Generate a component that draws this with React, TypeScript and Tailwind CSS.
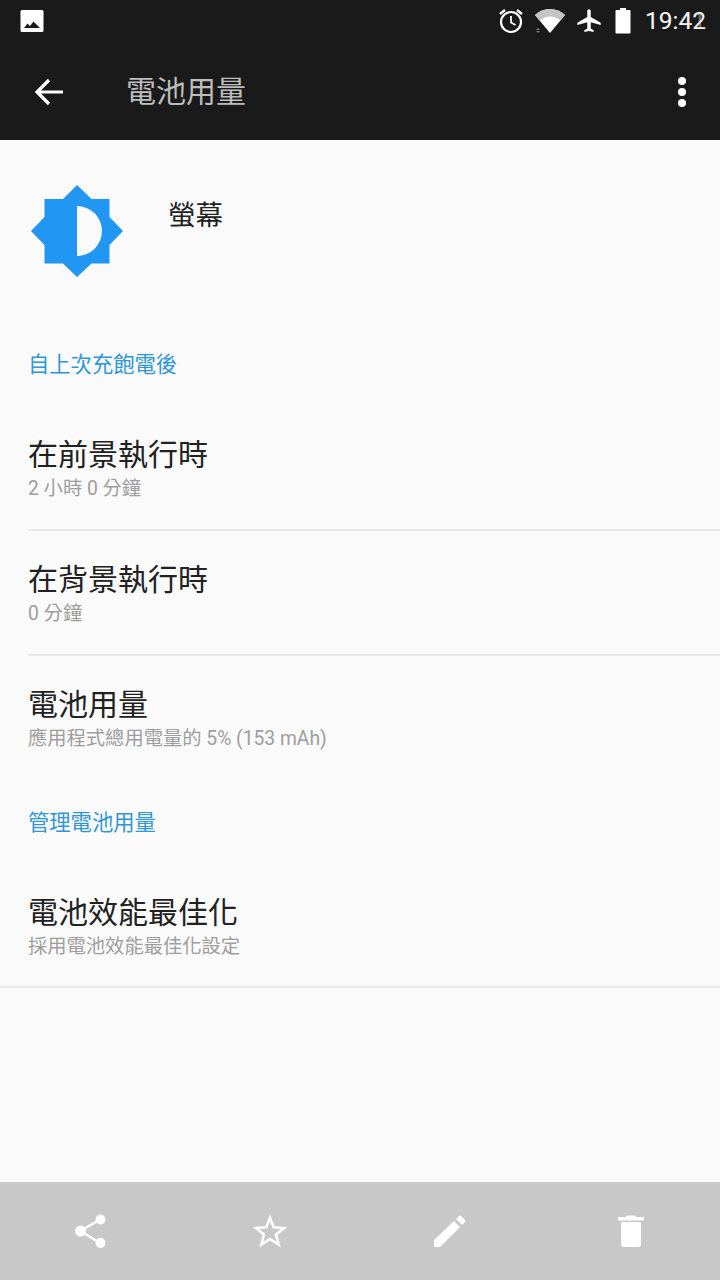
const cjk = "font-['Roboto','Noto_Sans_CJK_TC',sans-serif]";

function Row({ title, sub, divider, full }: { title: string; sub: string; divider?: boolean; full?: boolean }) {
  return (
    <div className={full ? "" : "pl-[28px]"}>
      <div className={full ? "pl-[28px] pt-[31px] pb-[26px]" : "pt-[31px] pb-[27px]"}>
        <div className="text-[30px] leading-[36px] text-[#212121]">{title}</div>
        <div className="text-[19.3px] leading-[26px] mt-[3px] text-[#9e9e9e]">{sub}</div>
      </div>
      {divider ? <div className="h-[2px] bg-[#e8e8e8]" /> : null}
    </div>
  );
}

function Section({ children, cls }: { children: string; cls: string }) {
  return <div className={`pl-[28px] text-[21.3px] leading-[28px] text-[#2f97d6] ${cls}`}>{children}</div>;
}

export default function App() {
  return (
    <div className={`w-[720px] h-[1280px] flex flex-col bg-[#fafafa] overflow-hidden ${cjk}`}>
      <div className="h-[140px] bg-[#1a1a1a] shrink-0 flex flex-col">
        <div className="h-[42px] flex items-center pl-[20px] pr-[14px] shrink-0">
          <svg width="24" height="24" viewBox="0 0 24 24">
            <path d="M2 1h20a1.500 1.500 0 0 1 1.500 1.500v19a1.500 1.500 0 0 1-1.500 1.500H2a1.500 1.500 0 0 1-1.500-1.500v-19A1.500 1.500 0 0 1 2 1z" fill="#fff" />
            <path d="M4 19l3.500-4.500 2.500 2.500 3.500-4.500 6.500 6.500z" fill="#1a1a1a" />
          </svg>
          <div className="flex-1" />
          <svg width="26" height="26" viewBox="0 0 26 26" className="mr-[10px]" fill="none" stroke="#fff">
            <circle cx="13" cy="14" r="10" strokeWidth="2.200" />
            <path d="M13 8v6.500l4.500 2.500" strokeWidth="1.800" />
            <path d="M2 6l5-4M24 6l-5-4" strokeWidth="2.400" />
          </svg>
          <svg width="32" height="26" viewBox="0 0 32 26" className="mr-[9px]">
            <path d="M1 7C9-1 23-1 31 7L16 25z" fill="#fff" />
            <path d="M1 7C9-1 23-1 31 7L26.500 12.500C20 7 12 7 5.500 12.500z" fill="#c4c4c4" />
            <path d="M4 20l-2 2h4zM4 25l-2-2h4z" fill="#777" />
          </svg>
          <svg width="28" height="28" viewBox="0 0 24 24" className="mr-[12px]">
            <path d="M22 15.500v-2l-8.500-5V3.500C13.500 2.670 12.830 2 12 2s-1.500.67-1.500 1.500v5L2 13.500v2l8.500-2.500v5.500l-2.500 1.500v1.500l4-1 4 1V20l-2.500-1.500V13z" fill="#fff" />
          </svg>
          <svg width="16" height="26" viewBox="0 0 16 26" className="mr-[14px]">
            <path d="M5 0h6v2h3.500a1 1 0 0 1 1 1v21.500a1 1 0 0 1-1 1H1.500a1 1 0 0 1-1-1V3a1 1 0 0 1 1-1H5z" fill="#fff" />
          </svg>
          <div className="relative text-[24.500px] leading-[28px] text-[#f0f0f0] font-['Roboto',sans-serif]">
            <span>19:42</span>
            <span className="absolute left-0 top-0 opacity-40">19:41</span>
          </div>
        </div>
        <div className="flex-1 flex items-center">
          <svg width="32" height="32" viewBox="0 0 32 32" className="ml-[33px] mt-[2px]" fill="none" stroke="#fff" strokeWidth="3.200">
            <path d="M30 16H5M16 4L4 16l12 12" />
          </svg>
          <div className="ml-[61px] mt-[2px] text-[30px] leading-[36px] text-[#bdbdbd]">電池用量</div>
          <div className="flex-1" />
          <div className="mr-[34px] mt-[2px] flex flex-col gap-[3px]">
            <div className="w-[8px] h-[8px] rounded-full bg-white" />
            <div className="w-[8px] h-[8px] rounded-full bg-white" />
            <div className="w-[8px] h-[8px] rounded-full bg-white" />
          </div>
        </div>
      </div>

      <div className="flex-1">
        <div className="flex h-[185px]">
          <svg width="92" height="92" viewBox="0 0 92 92" className="ml-[31px] mt-[45px]">
            <path d="M46 0L60.500 14H78.500V32L92 46L78.500 60V78.500H60.500L46 92L32 78.500H13.500V60L0 46L13.500 32V14H32Z" fill="#2196f3" />
            <path d="M46 21A25 25 0 0 1 46 71Z" fill="#fafafa" />
          </svg>
          <div className="ml-[45px] mt-[60px] text-[27.500px] leading-[32px] text-[#212121]">螢幕</div>
        </div>
        <Section cls="mt-[26px] mb-[27px]">自上次充飽電後</Section>
        <Row title="在前景執行時" sub="2 小時 0 分鐘" divider />
        <Row title="在背景執行時" sub="0 分鐘" divider />
        <Row title="電池用量" sub="應用程式總用電量的 5% (153 mAh)" />
        <Section cls="mt-[30px] mb-[27px]">管理電池用量</Section>
        <Row title="電池效能最佳化" sub="採用電池效能最佳化設定" divider full />
      </div>

      <div className="h-[98px] bg-[#c8c8c8] shrink-0 flex items-center">
        <div className="w-[181px] flex justify-center">
          <svg width="34" height="36" viewBox="0 0 34 36" fill="#fff" stroke="#fff">
            <circle cx="26.500" cy="6.500" r="5" strokeWidth="0" />
            <circle cx="6.500" cy="18" r="5.500" strokeWidth="0" />
            <circle cx="26.500" cy="30" r="5" strokeWidth="0" />
            <path d="M26 6.500L6.500 18L26 30" fill="none" strokeWidth="2.500" />
          </svg>
        </div>
        <div className="w-[178px] flex justify-center">
          <svg width="34" height="34" viewBox="0 0 34 34" fill="none" stroke="#fff" strokeWidth="2.600">
            <path d="M17 4l3.700 9.300 10.300.7-8 6.500 2.600 10L17 25l-8.600 5.500 2.600-10-8-6.500 10.300-.7z" />
          </svg>
        </div>
        <div className="w-[182px] flex justify-center">
          <svg width="34" height="34" viewBox="0 0 34 34" fill="#fff">
            <path d="M1 26L21 7l6 6L7 33H1zM23 5l3-3q1-1 2 0l4 4q1 1 0 2l-3 3z" />
          </svg>
        </div>
        <div className="w-[179px] flex justify-center">
          <svg width="26" height="34" viewBox="0 0 26 34" fill="#fff">
            <path d="M3 8h20v22a3 3 0 0 1-3 3H6a3 3 0 0 1-3-3zM0 3h8l1-1.500h8L18 3h8v3.500H0z" />
          </svg>
        </div>
      </div>
    </div>
  );
}
